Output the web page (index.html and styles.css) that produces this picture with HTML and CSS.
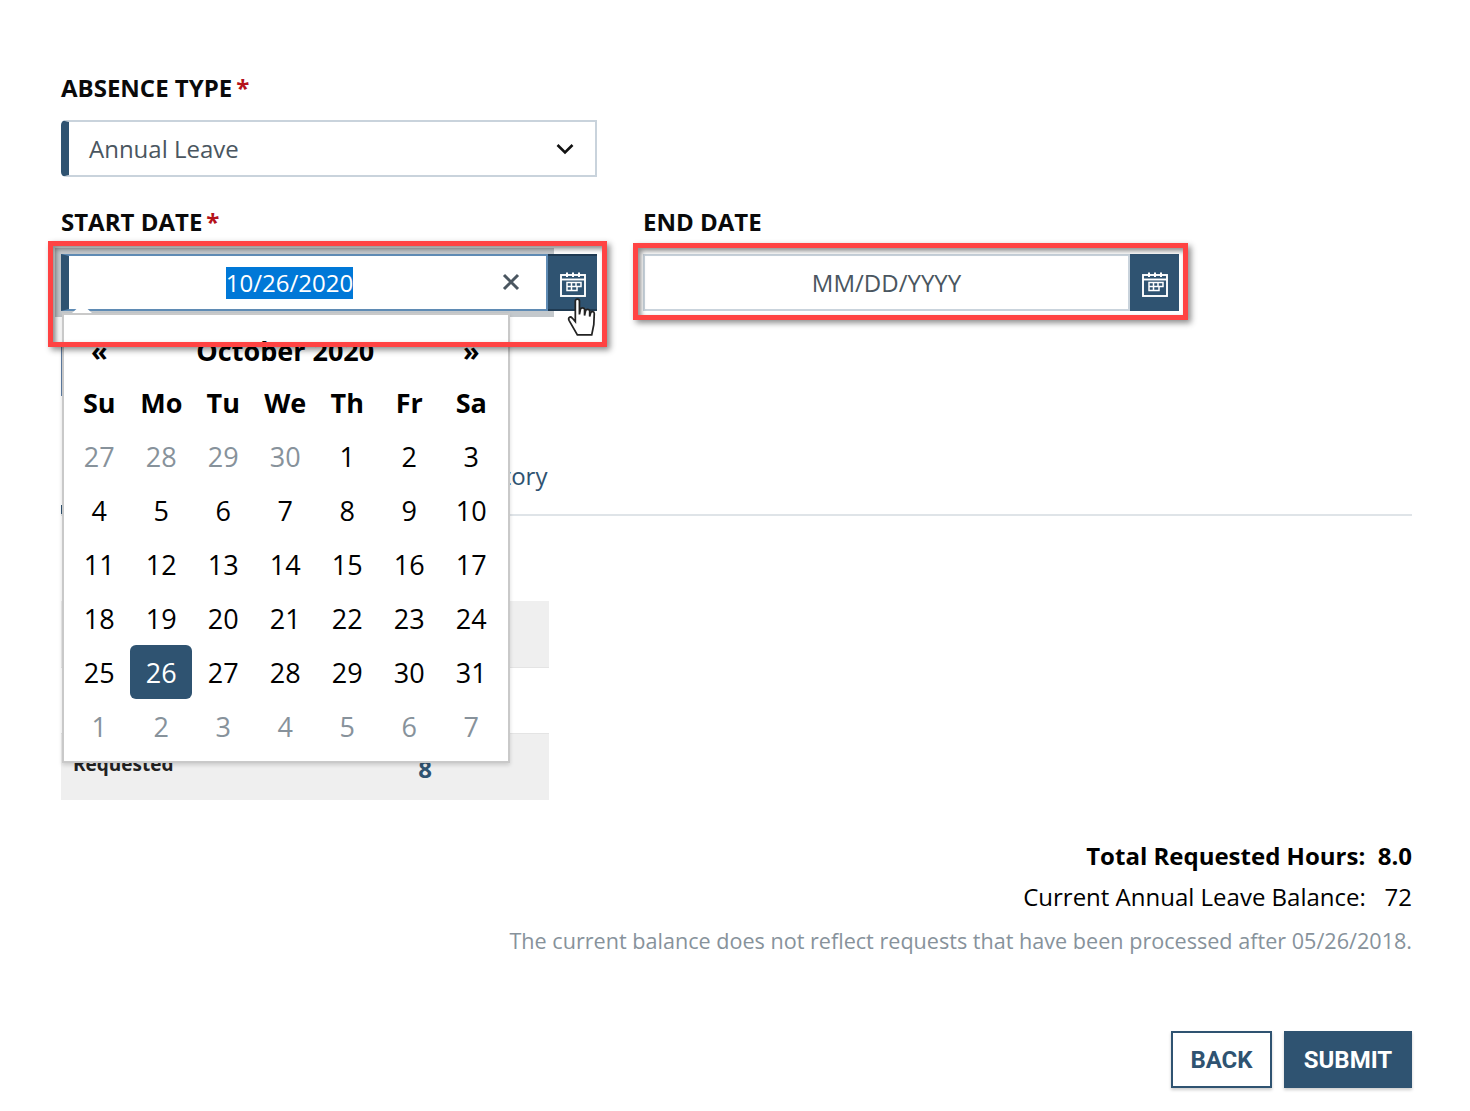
FILE: index.html
```html
<!DOCTYPE html>
<html lang="en">
<head>
  <meta charset="UTF-8" />
  <title>Absence Request</title>
  <link rel="stylesheet" href="styles.css">
</head>
<body>
  <main class="page">

    <div class="field">
      <div class="field-label">ABSENCE TYPE<span class="req">*</span></div>
      <div class="select-box">
        <span>Annual Leave</span>
        <svg class="chevron" width="18" height="12" viewBox="0 0 18 12"><path d="M1.5 2 L9 9.5 L16.5 2" fill="none" stroke="#111" stroke-width="2.6"/></svg>
      </div>
    </div>

    <div class="date-row">
      <div class="date-col start-col">
        <div class="field-label">START DATE<span class="req">*</span></div>
        <div class="date-input focused">
          <div class="date-text"><span class="selected-text">10/26/2020</span></div>
          <svg class="clear" width="18" height="18" viewBox="0 0 18 18"><path d="M2 2 L16 16 M16 2 L2 16" stroke="#4a5660" stroke-width="3"/></svg>
          <button class="cal-btn">
            <svg width="26" height="25" viewBox="0 0 26 25"><use href="#cal-icon"/></svg>
          </button>
        </div>
        <div class="annotation annotation-start"></div>
        <svg class="hand" width="33" height="41" viewBox="0 0 32 40">
          <path d="M9 4 C9 1.5 13 1.5 13 4 L13 17 L14 12 C14.500 10 17.500 10 18 12 L18 18 L19 13.500 C19.500 11.500 22.500 11.500 23 13.500 L23 19 L24 15.500 C24.500 13.500 27.500 14 27.500 16 L27 27 L25 37 L11 37 L3 23 C1.500 20 4 18.500 6 20.500 L9 24 Z" fill="#fff" stroke="#222" stroke-width="1.700"/>
        </svg>
        <div class="calendar">
          <i class="cal-arrow"></i>
          <div class="cal-head"><span>«</span><span class="cal-title">October 2020</span><span>»</span></div>
          <div class="cal-grid">
            <b>Su</b><b>Mo</b><b>Tu</b><b>We</b><b>Th</b><b>Fr</b><b>Sa</b>
            <span class="muted">27</span><span class="muted">28</span><span class="muted">29</span><span class="muted">30</span><span>1</span><span>2</span><span>3</span>
            <span>4</span><span>5</span><span>6</span><span>7</span><span>8</span><span>9</span><span>10</span>
            <span>11</span><span>12</span><span>13</span><span>14</span><span>15</span><span>16</span><span>17</span>
            <span>18</span><span>19</span><span>20</span><span>21</span><span>22</span><span>23</span><span>24</span>
            <span>25</span><span class="today">26</span><span>27</span><span>28</span><span>29</span><span>30</span><span>31</span>
            <span class="muted">1</span><span class="muted">2</span><span class="muted">3</span><span class="muted">4</span><span class="muted">5</span><span class="muted">6</span><span class="muted">7</span>
          </div>
        </div>
      </div>

      <div class="date-col end-col">
        <div class="field-label">END DATE</div>
        <div class="date-input plain">
          <div class="date-text placeholder">MM/DD/YYYY</div>
          <button class="cal-btn">
            <svg width="26" height="25" viewBox="0 0 26 25"><use href="#cal-icon"/></svg>
          </button>
        </div>
        <div class="annotation annotation-end"></div>
      </div>
    </div>

    <div class="hidden-field"></div>

    <div class="tabs">
      <span class="tab-mark"></span>
      <span class="tab">Request History</span>
    </div>

    <div class="hours-table">
      <div class="hours-row shaded"><span class="hours-name">Date</span><span class="hours-val">10/26</span></div>
      <div class="hours-row"><span class="hours-name">Balance</span><span class="hours-val">72</span></div>
      <div class="hours-row shaded"><span class="hours-name">Requested</span><span class="hours-val">8</span></div>
    </div>

    <div class="summary">
      <p class="total">Total Requested Hours:&nbsp; 8.0</p>
      <p class="balance">Current Annual Leave Balance:&nbsp;&nbsp; 72</p>
      <p class="note">The current balance does not reflect requests that have been processed after 05/26/2018.</p>
    </div>

    <div class="actions">
      <button class="btn btn-back">BACK</button>
      <button class="btn btn-submit">SUBMIT</button>
    </div>
  </main>

  <svg width="0" height="0" class="defs">
    <defs>
      <g id="cal-icon" fill="none" stroke="#fff">
        <rect x="1" y="3" width="24" height="21" stroke-width="1.900"/>
        <path d="M1 7.500 H25" stroke-width="1.900"/>
        <path d="M7 0.500 V5 M13 0.500 V5 M19 0.500 V5" stroke-width="2"/>
        <path d="M7 10.500 H21 V14.500 H17 V18.500 H7 Z M7 14.500 H17 M11.500 10.500 V18.500 M16 10.500 V14.500" stroke-width="1.500"/>
      </g>
    </defs>
  </svg>
</body>
</html>
```

FILE: styles.css
```css
/* Reset */
* {
  margin: 0;
  padding: 0;
  box-sizing: border-box;
}

body {
  background: #fff;
  color: #000;
  font-family: 'Open Sans', 'Liberation Sans', sans-serif;
  height: 1111px;
  overflow: hidden;
}

.page {
  padding: 72px 58px 0 61px;
}

.defs {
  position: absolute;
}

/* Labels */
.field-label {
  font-size: 24px;
  font-weight: 700;
  line-height: 32px;
  height: 32px;
  color: #0a0a0a;
}
.req {
  color: #b5121b;
  margin-left: 4px;
}

/* Select */
.select-box {
  margin-top: 16px;
  width: 536px;
  height: 57px;
  border: 2px solid #c9d3dc;
  border-left: 8px solid #2f5371;
  border-radius: 5px 0 0 5px;
  display: flex;
  align-items: center;
  justify-content: space-between;
  padding: 0 21px 0 20px;
  font-size: 24px;
  color: #4a5660;
}

/* Date row */
.date-row {
  display: flex;
  gap: 46px;
  margin-top: 29px;
}
.date-col {
  position: relative;
  width: 536px;
}
.date-input {
  margin-top: 16px;
  height: 57px;
  display: flex;
  align-items: stretch;
  position: relative;
}
.date-text {
  flex: 1;
  display: flex;
  align-items: center;
  justify-content: center;
  font-size: 24px;
  background: #fff;
}
.focused .date-text {
  border: 2px solid #5f8bb4;
  border-left: 8px solid #2f5371;
  box-shadow: 0 0 0 6px #c3c8cc;
  padding-right: 36px;
}
.plain .date-text {
  border: 2px solid #c9d3dc;
}
.placeholder {
  color: #4a5660;
}
.selected-text {
  background: #0078d7;
  color: #fff;
  line-height: 32px;
}
.clear {
  position: absolute;
  left: 441px;
  top: 19px;
}
.cal-btn {
  width: 49px;
  border: none;
  border-top: 2px solid #1f3a52;
  border-bottom: 2px solid #1f3a52;
  background: #2f5371;
  display: flex;
  align-items: center;
  justify-content: center;
  padding-top: 3px;
  position: relative;
}
.plain .cal-btn {
  border: none;
}

/* Red annotation boxes drawn over the screenshot */
.annotation {
  position: absolute;
  border: 5px solid #ff4343;
  box-shadow: 3px 3px 6px rgba(0, 0, 0, 0.45), inset 3px 3px 5px rgba(0, 0, 0, 0.45);
  z-index: 5;
  pointer-events: none;
}
.annotation-start {
  left: -13px;
  top: 35px;
  width: 559px;
  height: 106px;
}
.annotation-end {
  left: -10px;
  top: 37px;
  width: 555px;
  height: 77px;
}
.hand {
  position: absolute;
  left: 505px;
  top: 91px;
  z-index: 6;
}

/* Calendar popup */
.calendar {
  position: absolute;
  left: 1px;
  top: 107px;
  width: 448px;
  height: 450px;
  background: #fff;
  border: 2px solid #c9c9c9;
  box-shadow: 0 2px 4px rgba(0, 0, 0, 0.15);
  z-index: 3;
  padding: 0 4px 0 4.300px;
}
.cal-arrow {
  position: absolute;
  left: 8px;
  top: -11px;
  border-left: 10px solid transparent;
  border-right: 10px solid transparent;
  border-bottom: 9px solid #fff;
}
.cal-head {
  display: grid;
  grid-template-columns: 62px 1fr 62px;
  width: 434px;
  height: 54px;
  padding-top: 10px;
  align-items: center;
  text-align: center;
  font-size: 27px;
  font-weight: 700;
  margin-top: 3px;
}
.cal-grid {
  display: grid;
  grid-template-columns: repeat(7, 62px);
  grid-auto-rows: 54px;
  text-align: center;
  font-size: 27px;
  line-height: 56px;
  margin-top: 3px;
}
.cal-grid b {
  font-weight: 700;
}
.muted {
  color: #87929b;
}
.today {
  background: #2f5371;
  color: #fff;
  border-radius: 6px;
}

/* Stuff behind the popup */
.hidden-field {
  margin-top: 34px;
  width: 4px;
  height: 51px;
  background: #5f7fa5;
}
.tabs {
  margin-top: 62px;
  width: 1351px;
  height: 58px;
  border-bottom: 2px solid #dfe4e8;
  position: relative;
  padding-left: 309px;
}
.tab {
  font-size: 24px;
  color: #2f5371;
  line-height: 36px;
}
.tab-mark {
  position: absolute;
  left: 0;
  bottom: 0;
  width: 2px;
  height: 9px;
  background: #2f5371;
}
.hours-table {
  margin-top: 85px;
  width: 488px;
}
.hours-row {
  height: 67px;
  display: flex;
  align-items: center;
  padding-left: 12px;
  border-bottom: 1px solid #e4e4e4;
}
.hours-row:nth-child(2) {
  height: 66px;
}
.hours-row.shaded {
  background: #efefef;
}
.hours-row:last-child {
  border-bottom: none;
  height: 66px;
}
.hours-name {
  width: 320px;
  font-size: 19px;
  font-weight: 700;
  color: #222;
  padding-bottom: 6px;
}
.hours-val {
  width: 64px;
  text-align: center;
  font-size: 24px;
  font-weight: 700;
  color: #2f5371;
  padding-top: 2px;
}

/* Totals */
.summary {
  margin-top: 39px;
  text-align: right;
  font-size: 24px;
  line-height: 34px;
}
.total {
  font-weight: 700;
}
.balance {
  margin-top: 7px;
}
.note {
  margin-top: 10px;
  font-size: 21.600px;
  color: #87929b;
}

/* Buttons */
.actions {
  display: flex;
  justify-content: flex-end;
  gap: 12px;
  margin-top: 73px;
}
.btn {
  height: 57px;
  font-family: Roboto, 'Liberation Sans', sans-serif;
  font-size: 24px;
  font-weight: 700;
  box-shadow: 0 2px 3px rgba(0, 0, 0, 0.2);
}
.btn-back {
  width: 101px;
  background: #fff;
  color: #2f5371;
  border: 2px solid #2f5371;
}
.btn-submit {
  width: 128px;
  background: #2f5371;
  color: #fff;
  border: none;
}
```
